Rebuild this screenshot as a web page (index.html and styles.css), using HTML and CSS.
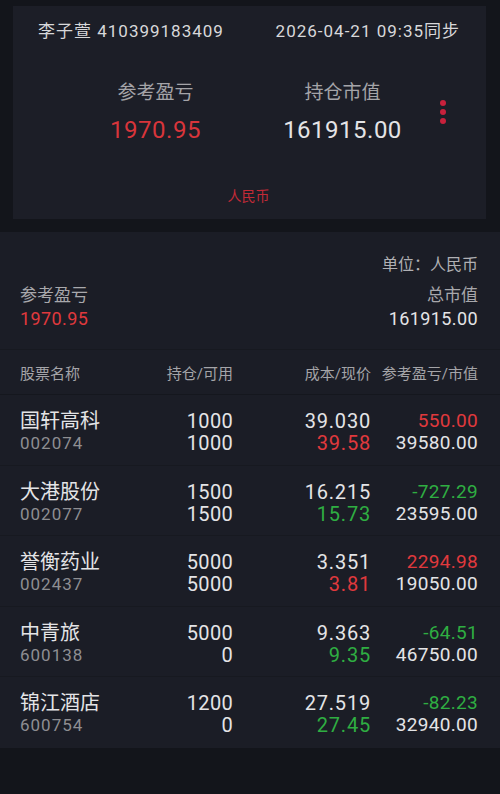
FILE: index.html
```html
<!DOCTYPE html>
<html lang="zh-CN">
<head>
    <meta charset="UTF-8">
    <meta name="viewport" content="width=device-width, initial-scale=1.0">
    <title>持仓</title>
    <link rel="stylesheet" href="styles.css">
</head>
<body>
    <div class="account">
        <div class="account-head">
            <span>李子萱 410399183409</span>
            <span>2026-04-21 09:35同步</span>
        </div>
        <div class="account-sum">
            <div class="sum-col">
                <div class="sum-label">参考盈亏</div>
                <div class="sum-value up">1970.95</div>
            </div>
            <div class="sum-col">
                <div class="sum-label">持仓市值</div>
                <div class="sum-value">161915.00</div>
            </div>
            <div class="more">
                <i></i><i></i><i></i>
            </div>
        </div>
        <div class="currency">人民币</div>
    </div>

    <div class="holdings">
        <div class="unit">单位：人民币</div>
        <div class="totals">
            <div>
                <div class="totals-label">参考盈亏</div>
                <div class="totals-value up">1970.95</div>
            </div>
            <div class="right">
                <div class="totals-label">总市值</div>
                <div class="totals-value">161915.00</div>
            </div>
        </div>

        <div class="grid table-head">
            <div>股票名称</div>
            <div class="right">持仓/可用</div>
            <div class="right">成本/现价</div>
            <div class="right">参考盈亏/市值</div>
        </div>

        <div class="grid stock">
            <div><div class="name">国轩高科</div><div class="code">002074</div></div>
            <div class="right qty"><div>1000</div><div>1000</div></div>
            <div class="right cost"><div>39.030</div><div class="up">39.58</div></div>
            <div class="right pnl"><div class="up">550.00</div><div>39580.00</div></div>
        </div>
        <div class="grid stock">
            <div><div class="name">大港股份</div><div class="code">002077</div></div>
            <div class="right qty"><div>1500</div><div>1500</div></div>
            <div class="right cost"><div>16.215</div><div class="down">15.73</div></div>
            <div class="right pnl"><div class="down">-727.29</div><div>23595.00</div></div>
        </div>
        <div class="grid stock">
            <div><div class="name">誉衡药业</div><div class="code">002437</div></div>
            <div class="right qty"><div>5000</div><div>5000</div></div>
            <div class="right cost"><div>3.351</div><div class="up">3.81</div></div>
            <div class="right pnl"><div class="up">2294.98</div><div>19050.00</div></div>
        </div>
        <div class="grid stock">
            <div><div class="name">中青旅</div><div class="code">600138</div></div>
            <div class="right qty"><div>5000</div><div>0</div></div>
            <div class="right cost"><div>9.363</div><div class="down">9.35</div></div>
            <div class="right pnl"><div class="down">-64.51</div><div>46750.00</div></div>
        </div>
        <div class="grid stock">
            <div><div class="name">锦江酒店</div><div class="code">600754</div></div>
            <div class="right qty"><div>1200</div><div>0</div></div>
            <div class="right cost"><div>27.519</div><div class="down">27.45</div></div>
            <div class="right pnl"><div class="down">-82.23</div><div>32940.00</div></div>
        </div>
    </div>
</body>
</html>
```

FILE: styles.css
```css
body {
    margin: 0;
    width: 500px;
    height: 794px;
    background-color: #13151b;
    color: #e4e4e6;
    font-family: Roboto, "Noto Sans CJK SC", sans-serif;
    overflow: hidden;
}
.up {
    color: #e0393d;
}
.down {
    color: #2fae42;
}
.right {
    text-align: right;
}

/* account card */
.account {
    margin: 6px 14px 13px 13px;
    height: 213px;
    background-color: #1c1e27;
    box-sizing: border-box;
    padding-top: 13px;
}
.account-head {
    display: flex;
    justify-content: space-between;
    padding: 0 26px 0 25px;
    font-size: 17px;
    line-height: 24px;
    letter-spacing: 1px;
    color: #d8d8da;
}
.account-sum {
    display: grid;
    grid-template-columns: 187px 187px 14px;
    padding-left: 49px;
    margin-top: 37px;
    align-items: center;
}
.sum-col {
    text-align: center;
}
.sum-label {
    font-size: 19px;
    line-height: 26px;
    color: #a4a4a8;
}
.sum-value {
    font-size: 24px;
    line-height: 32px;
    letter-spacing: 0.5px;
    margin-top: 8px;
}
.sum-value.up {
    color: #d8353b;
}
.more {
    display: flex;
    flex-direction: column;
    align-items: center;
    gap: 3px;
    margin-top: -2px;
}
.more i {
    width: 6px;
    height: 6px;
    border-radius: 50%;
    background-color: #c8213c;
}
.currency {
    text-align: center;
    margin-top: 40px;
    margin-left: -2px;
    font-size: 14px;
    line-height: 20px;
    color: #c22a37;
}

/* holdings list */
.holdings {
    background-color: #1b1d26;
    height: 516px;
}
.unit {
    text-align: right;
    padding: 22px 22px 0 0;
    font-size: 16px;
    line-height: 22px;
    color: #b0b0b4;
}
.totals {
    display: flex;
    justify-content: space-between;
    padding: 7px 22px 0 20px;
    height: 66px;
    border-bottom: 1px solid #171920;
}
.totals-label {
    font-size: 17px;
    line-height: 24px;
    color: #a8a8ac;
}
.totals-value {
    font-size: 18px;
    line-height: 24px;
    letter-spacing: 0.4px;
}
.grid {
    display: grid;
    grid-template-columns: 120px 93px 138px 107px;
    padding: 0 22px 0 20px;
}
.table-head {
    height: 44px;
    align-items: center;
    font-size: 15px;
    color: #a4a4a8;
    border-bottom: 1px solid #15171e;
}
.stock {
    height: 70.6px;
    padding-top: 15px;
    box-sizing: border-box;
    font-size: 19px;
    line-height: 22px;
    border-bottom: 1px solid #171920;
}
.stock:last-child {
    border-bottom: none;
}
.name {
    font-size: 20px;
}
.code {
    font-size: 17px;
    letter-spacing: 1px;
    color: #8e8e92;
}
.qty {
    font-size: 20px;
    letter-spacing: 0.3px;
}
.cost {
    font-size: 20px;
    letter-spacing: 0.8px;
}
.pnl {
    font-size: 19px;
    letter-spacing: 0.3px;
}
```
